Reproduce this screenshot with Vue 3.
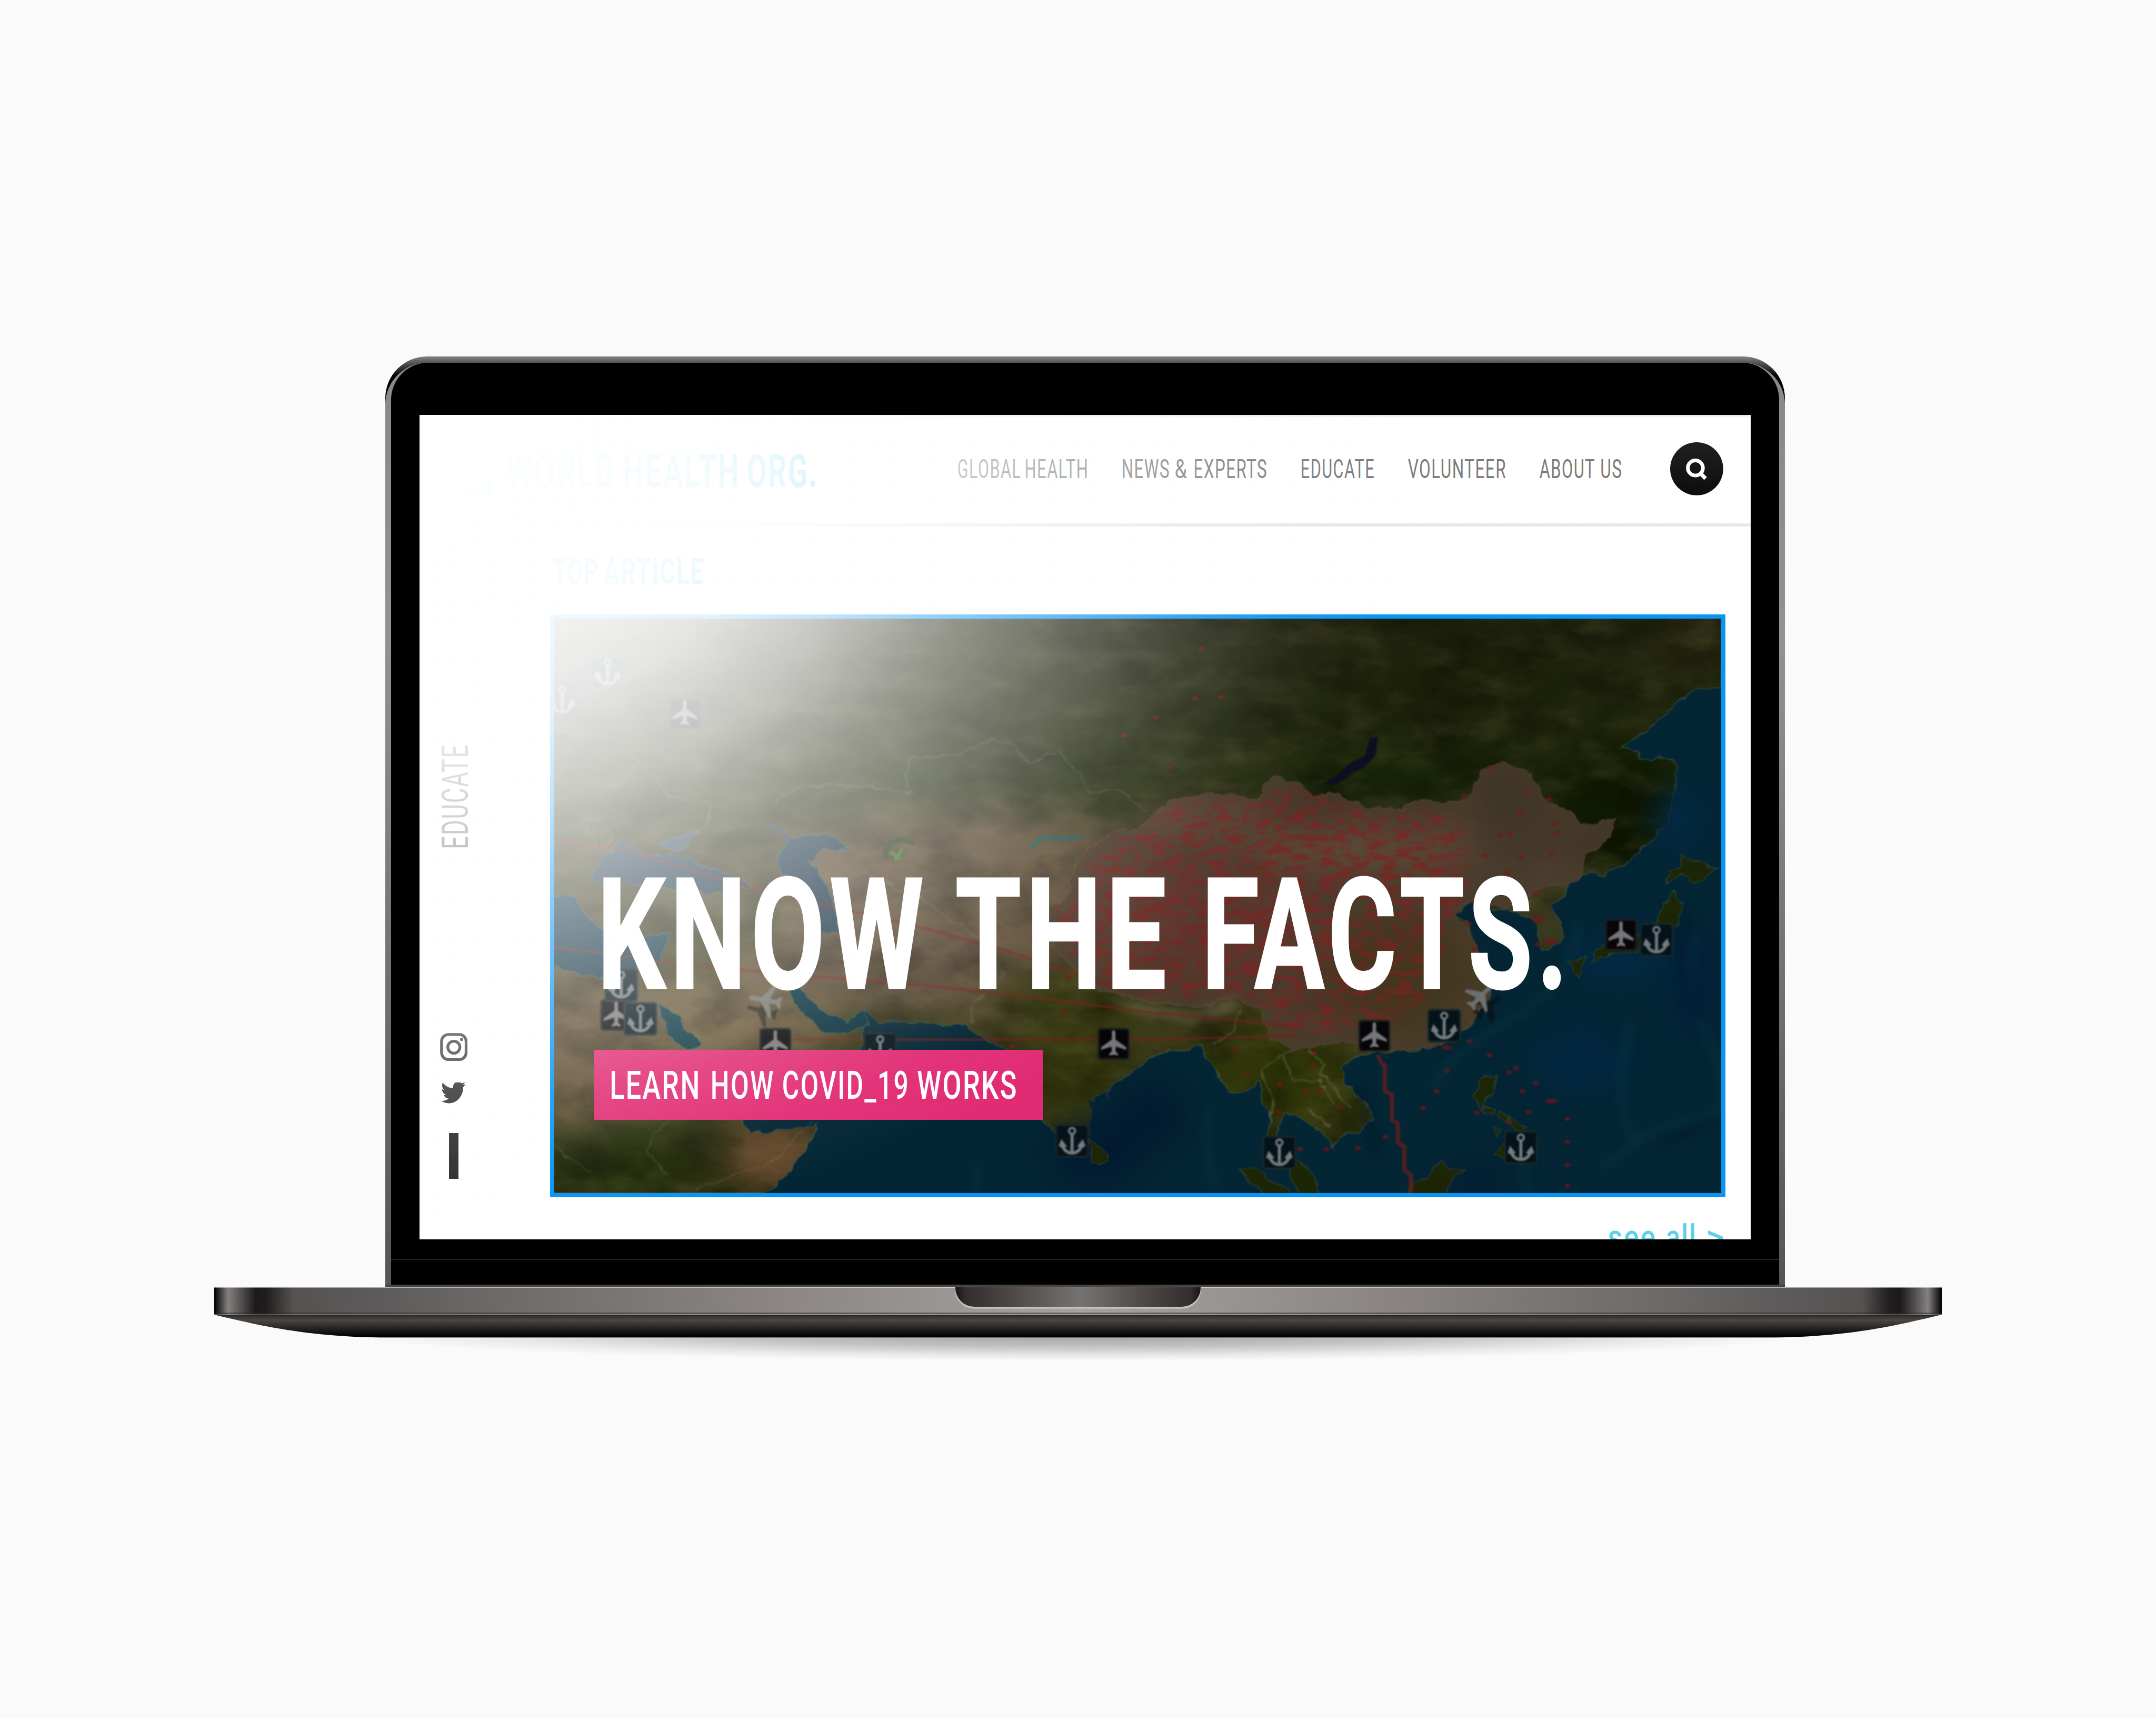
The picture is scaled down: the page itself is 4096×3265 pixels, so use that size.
<script setup>
import { h } from 'vue'

// One line of condensed capitals. Each word is fitted to its own width;
// `cap` is the cap height and sets the height of the box.
const FitText = (props) => {
  const size = props.size || props.cap / 0.711
  const pad = size * 0.025
  const last = props.words[props.words.length - 1]
  const w = last[1] + last[2]
  const up = props.vertical
  const texts = props.words.map(([t, x, len]) =>
    h('text', {
      x: x - pad,
      y: props.cap,
      textLength: len + pad * 3,
      lengthAdjust: 'spacingAndGlyphs',
      'font-size': size,
      'font-weight': props.weight || 400,
      fill: 'currentColor',
      stroke: 'currentColor',
      'stroke-width': props.bold || 0,
      'letter-spacing': size * 0.045,
      'font-family': 'Roboto, "Liberation Sans", sans-serif'
    }, t))
  return h('svg', {
    viewBox: up ? `0 0 ${props.cap} ${w}` : `0 0 ${w} ${props.cap}`,
    style: {
      width: (up ? props.cap : w) / 100 + 'rem',
      height: (up ? w : props.cap) / 100 + 'rem',
      overflow: 'visible',
      display: 'block',
      flex: 'none'
    }
  }, [h('g', { transform: up ? `translate(0 ${w}) rotate(-90)` : undefined }, texts)])
}
FitText.props = { words: Array, cap: Number, weight: Number, bold: Number, size: Number, vertical: Boolean }

const nav = [
  [['GLOBAL', 0, 144], ['HEALTH', 156, 144]],
  [['NEWS', 0, 108], ['&', 123, 26], ['EXPERTS', 167, 167]],
  [['EDUCATE', 0, 168]],
  [['VOLUNTEER', 0, 224]],
  [['ABOUT', 0, 125], ['US', 141, 47]]
]

const L = (x, y) => [1260 + x / 1.12, 1400 + y / 1.12]
const R = (x, y) => [2600 + x * 0.9247, 1400 + y / 1.12]
const anchors = [L(170, 178), L(52, 250), L(205, 990), L(255, 1078), L(877, 1157), L(1375, 1395),
  R(1343, 873), R(811, 1096), R(398, 1425), R(1003, 1412)]
const planes = [L(370, 285), L(192, 1068), L(605, 1143), L(1483, 1143), R(1254, 860), R(636, 1122)]
const cases = [[187, 246], [253, 243], [88, 296], [120, 427], [202, 118], [8, 342], [1075, 508], [925, 426],
  [860, 500], [872, 832], [888, 895], [875, 1136], [925, 1172], [818, 1153], [818, 1213], [973, 1217], [990, 1206],
  [1040, 1245], [1006, 1266], [792, 1266], [758, 1310], [893, 1322], [1023, 1320], [972, 1347], [1078, 1291],
  [1120, 1338], [1120, 1397], [1120, 1457], [1120, 1511], [595, 1413], [515, 1416], [450, 1416], [664, 1385],
  [547, 1307], [465, 1266], [498, 1266], [400, 1250], [397, 1320], [318, 1217], [482, 1200], [286, 1160],
  [484, 1166], [1045, 818], [1078, 878], [1045, 884], [1040, 752], [-140, 1060], [-130, 970], [-270, 1150],
  [950, 602], [975, 600], [1095, 595], [1088, 570], [1080, 648], [1005, 660], [970, 700], [1000, 545], [1020, 490], [912, 655]]
</script>

<template>
  <div class="stage">
    <div class="laptop">
      <div class="lid">
        <div class="bezel">
          <div class="screen">
            <header class="header">
              <svg class="logo" viewBox="0 0 100 100"><path d="M0 0h100L0 100z" opacity=".2" /><path d="M100 62v38H37z" /></svg>
              <FitText class="brand" :words="[['WORLD', 0, 244], ['HEALTH', 269, 264], ['ORG.', 557, 158]]" :cap="75" :weight="700" />
              <nav class="nav">
                <FitText v-for="(item, i) in nav" :key="i" :words="item" :cap="44" :weight="400" />
              </nav>
              <svg class="search" viewBox="0 0 123 123">
                <defs><linearGradient id="sg" x2="0" y2="1"><stop stop-color="#202020" /><stop offset="1" stop-color="#0d0d0d" /></linearGradient></defs>
                <circle cx="61.5" cy="61.5" r="61.5" fill="url(#sg)" />
                <circle cx="58.5" cy="59.5" r="17.5" fill="none" stroke="#fff" stroke-width="8.5" />
                <path d="M70 72l12 12" stroke="#fff" stroke-width="9" />
              </svg>
            </header>
            <div class="rule"></div>
            <div class="body">
              <aside class="side">
                <FitText class="section" vertical :words="[['EDUCATE', 0, 238]]" :cap="61" :weight="400" />
                <svg class="insta" viewBox="0 0 64 65" fill="none" stroke="#404040" stroke-width="6.5">
                  <rect x="3.5" y="3.5" width="57" height="58" rx="16" />
                  <circle cx="32" cy="33" r="14" />
                  <circle cx="50" cy="15" r="3.6" fill="#404040" stroke="none" />
                </svg>
                <svg class="bird" viewBox="0 3 24 19.5" preserveAspectRatio="none"><path d="M23.95 4.57a10 10 0 0 1-2.82.77 4.96 4.96 0 0 0 2.16-2.72c-.95.55-2 .95-3.13 1.18a4.92 4.92 0 0 0-8.38 4.48C7.69 8.09 4.07 6.13 1.64 3.16a4.82 4.82 0 0 0-.67 2.48c0 1.71.87 3.21 2.19 4.1a4.9 4.9 0 0 1-2.23-.62v.06a4.92 4.92 0 0 0 3.95 4.83 5 5 0 0 1-2.21.08 4.94 4.94 0 0 0 4.6 3.42A9.87 9.87 0 0 1 0 19.54a13.99 13.99 0 0 0 7.55 2.21c9.05 0 14-7.5 14-13.98 0-.21 0-.42-.02-.63a9.94 9.94 0 0 0 2.46-2.55z" /></svg>
                <div class="bar"></div>
              </aside>
              <main class="main">
                <FitText class="kicker" :words="[['TOP', 0, 103], ['ARTICLE', 119, 228]]" :cap="59" :weight="700" />
                <section class="hero">
                  <svg class="map" viewBox="1288 1435 2703 1331" preserveAspectRatio="none">
                    <defs>
                      <linearGradient id="land" x2="0" y2="1">
                        <stop stop-color="#1d210d" /><stop offset=".3" stop-color="#262e10" />
                        <stop offset=".42" stop-color="#3a3920" /><stop offset=".75" stop-color="#3c3a1a" /><stop offset="1" stop-color="#232a08" />
                      </linearGradient>
                      <filter id="b40" x="-50%" y="-50%" width="200%" height="200%" color-interpolation-filters="sRGB"><feGaussianBlur stdDeviation="42" /></filter>
                      <filter id="b12" x="-50%" y="-50%" width="200%" height="200%" color-interpolation-filters="sRGB"><feGaussianBlur stdDeviation="13" /></filter>
                      <filter id="soft" color-interpolation-filters="sRGB"><feGaussianBlur stdDeviation="1.8" /></filter>
                      <filter id="grain" x="0" y="0" width="100%" height="100%" color-interpolation-filters="sRGB">
                        <feTurbulence type="fractalNoise" baseFrequency=".007 .011" numOctaves="6" seed="8" />
                        <feColorMatrix values="0 0 0 0 .03  0 0 0 0 .04  0 0 0 0 0  2.6 0 0 0 -1.05" />
                      </filter>
                      <filter id="glow" x="0" y="0" width="100%" height="100%" color-interpolation-filters="sRGB">
                        <feTurbulence type="fractalNoise" baseFrequency=".009 .018" numOctaves="5" seed="21" />
                        <feColorMatrix values="0 0 0 0 .62  0 0 0 0 .54  0 0 0 0 .36  0 2.2 0 0 -1" />
                      </filter>
                      <filter id="rough" x="-5%" y="-5%" width="110%" height="110%" color-interpolation-filters="sRGB">
                        <feTurbulence type="fractalNoise" baseFrequency=".03" numOctaves="3" seed="3" />
                        <feDisplacementMap in="SourceGraphic" scale="22" xChannelSelector="R" yChannelSelector="G" />
                        <feGaussianBlur stdDeviation="1.4" />
                      </filter>
                      <filter id="redspots" x="0" y="0" width="100%" height="100%" color-interpolation-filters="sRGB">
                        <feTurbulence type="fractalNoise" baseFrequency=".026 .06" numOctaves="3" seed="12" />
                        <feColorMatrix values="0 0 0 0 .5  0 0 0 0 .13  0 0 0 0 .13  4 0 0 0 -1.7" result="n" />
                        <feGaussianBlur in="SourceGraphic" stdDeviation="9" result="s" />
                        <feComposite in="n" in2="s" operator="in" />
                        <feGaussianBlur stdDeviation="1.6" />
                      </filter>
                      <g id="anchor">
                        <rect x="-37" y="-37" width="74" height="74" rx="6" fill="#04131a" stroke="#1a2a2c" stroke-width="4" />
                        <g stroke="#777b7d" fill="none" stroke-width="7">
                          <circle cy="-23" r="7" stroke-width="5" /><path d="M0-15V28" /><path d="M-23 10Q-16 28 0 28T23 10" />
                        </g>
                        <path d="M-31 12L-25-4L-12 12L-20 18ZM31 12L25-4L12 12L20 18Z" fill="#777b7d" />
                      </g>
                      <path id="jet" d="M-4-29Q0-34 4-29V-10L29 8V14L5 6L4 17L10 23V27L0 25L-10 27V23L-4 17L-5 6L-29 14V8L-4-10Z" />
                      <g id="plane">
                        <rect x="-35" y="-35" width="70" height="70" rx="6" fill="#060608" stroke="#1d2022" stroke-width="4" />
                        <use href="#jet" fill="#77777a" />
                      </g>
                    </defs>

                    <rect x="1288" y="1435" width="2703" height="1331" fill="url(#land)" />
                    <g filter="url(#b40)">
                      <ellipse cx="2250" cy="2080" rx="480" ry="200" fill="#5b4b34" />
                      <ellipse cx="2100" cy="2230" rx="380" ry="100" fill="#5c4a36" />
                      <ellipse cx="1700" cy="2090" rx="200" ry="60" fill="#4e4a2c" />
                      <ellipse cx="1650" cy="2370" rx="280" ry="110" fill="#6a5839" />
                      <ellipse cx="1350" cy="2450" rx="130" ry="180" fill="#604e33" />
                      <ellipse cx="1420" cy="2690" rx="180" ry="80" fill="#202c06" />
                      <ellipse cx="1800" cy="2680" rx="120" ry="90" fill="#65482d" />
                      <ellipse cx="2540" cy="2300" rx="240" ry="55" fill="#35390d" />
                      <ellipse cx="2500" cy="2480" rx="130" ry="110" fill="#33360e" />
                      <ellipse cx="2950" cy="2500" rx="220" ry="120" fill="#2f3508" />
                      <ellipse cx="3760" cy="1880" rx="170" ry="170" fill="#101a02" />
                      <ellipse cx="3300" cy="1800" rx="300" ry="60" fill="#142006" />
                      <ellipse cx="3930" cy="1500" rx="100" ry="40" fill="#2d2813" />
                      <ellipse cx="3400" cy="1600" rx="300" ry="70" fill="#1b2009" />
                    </g>
                    <rect x="1288" y="1435" width="2703" height="1331" filter="url(#grain)" opacity=".38" />
                    <rect x="1288" y="1435" width="2703" height="1331" filter="url(#glow)" opacity=".16" />

                    <g filter="url(#rough)" stroke="#4d7060" stroke-opacity=".45" stroke-width="3">
                      <g transform="translate(1260 1400) scale(.8929)">
                        <path fill="#042534" d="M840 1060L870 1085L1100 1095L1130 1120L1180 1145L1220 1165L1300 1340L1330 1370L1370 1425L1420 1385L1430 1340L1435 1280L1480 1260L1580 1195V1560H550L640 1470L700 1400L712 1350L600 1370L540 1370L515 1345L620 1300L820 1180L835 1100Z" />
                        <path fill="#07303c" d="M640 1005L670 1000L720 1050L790 1085L835 1060L850 1095L770 1115L730 1110L700 1080L660 1050Z" />
                        <path fill="#0b3640" d="M298 1035L350 1070L410 1150L380 1160L330 1120Z" />
                        <path fill="#1b3445" d="M605 655L640 610L700 600L750 600L795 640L740 640L690 665L735 720L760 800L770 850L710 850L700 760L630 700Z" />
                        <path fill="#1e3547" d="M130 715L150 660L210 615L260 650L310 655L350 650L420 685L500 710L545 735L450 750L350 745L250 730Z" />
                        <path fill="#2b4050" d="M305 625L340 605L410 590L380 630L340 642Z" />
                        <path fill="#123344" d="M20 760L80 755L100 800L150 840L200 870L330 855L310 930L240 935L230 975L140 970L20 945Z" />
                        <path fill="none" stroke="#25384a" stroke-width="7" d="M550 550L640 612" stroke-opacity="1" />
                      </g>
                      <g transform="translate(2600 1400) scale(.9247 .8929)">
                        <path fill="#042534" d="M1540 220L1440 222L1400 250L1330 320L1255 372L1290 380L1300 400L1330 410L1350 392L1390 415L1392 460L1375 560L1330 610L1260 680L1210 705L1165 700L1120 730L1115 755L1075 780L1110 830L1105 880L1060 900L1045 860L1050 840L1000 800L960 800L880 770L835 805L870 830L880 870L905 930L930 1000L900 1060L860 1110L800 1145L720 1160L640 1165L590 1175L550 1205L570 1250L610 1290L630 1340L610 1365L570 1375L530 1410L520 1385L470 1350L440 1325L410 1325L390 1385L374 1380L380 1340L355 1290L350 1240L310 1270L270 1270L230 1200L200 1150L100 1165L60 1190L-30 1262V1560H1540Z" />
                        <rect x="-75" y="1290" width="70" height="260" fill="#042534" stroke="none" />
                      </g>
                    </g>
                    <g transform="translate(2600 1400) scale(.9247 .8929)" filter="url(#b40)">
                      <ellipse cx="-60" cy="1430" rx="110" ry="80" fill="#021a30" /><ellipse cx="70" cy="1330" rx="90" ry="80" fill="#021a30" />
                      <ellipse cx="1250" cy="920" rx="120" ry="60" fill="#032a45" /><ellipse cx="1400" cy="560" rx="60" ry="80" fill="#022943" />
                      <ellipse cx="1150" cy="1190" rx="130" ry="90" fill="#032741" /><ellipse cx="1430" cy="980" rx="50" ry="140" fill="#02203c" />
                      <ellipse cx="900" cy="1500" rx="70" ry="40" fill="#021c33" />
                    </g>
                    <g transform="translate(2600 1400) scale(.9247 .8929)" filter="url(#b12)" fill="none" stroke="#0b4450" stroke-opacity=".38" stroke-width="14">
                      <path d="M1440 860Q1400 1000 1460 1100T1500 1320L1330 1370L1200 1470" /><path d="M1280 1080Q1230 1300 1290 1400" />
                      <path d="M1150 820Q1130 1000 980 1080T780 1260" /><path d="M230 1290Q200 1400 240 1520" /><path d="M1010 1450L1020 1540M-360 1450V1530" />
                      <path stroke="#011026" stroke-opacity=".6" d="M1420 800Q1390 960 1450 1080M1350 1400L1490 1340M600 1250L640 1440" />
                    </g>
                    <g filter="url(#rough)" stroke="#4d7060" stroke-opacity=".4" stroke-width="2.5" fill="#1d2507">
                      <path d="M2532 2641L2573 2681L2555 2704L2532 2695Z" />
                      <g transform="translate(2600 1400) scale(.9247 .8929)">
                        <path d="M295 1468L340 1472L400 1505L440 1545H370Z" /><path d="M415 1440L460 1455L488 1490L505 1545H455L425 1490Z" />
                        <path d="M700 1550L770 1480L800 1450L820 1465L862 1470L830 1500L805 1550Z" />
                        <path d="M905 1230L940 1225L940 1260L912 1300L905 1315L885 1280Z" />
                        <path d="M912 1308L940 1318L935 1330L912 1322ZM950 1318L980 1335L970 1345L948 1330ZM935 1355L955 1360L945 1385ZM980 1335L1015 1362L1005 1372L975 1350Z" />
                        <path d="M940 1430L975 1395L1000 1370L1025 1390L1040 1430L990 1450Z" />
                        <path d="M1405 645L1440 670L1495 685L1440 725L1400 700L1370 725L1375 690L1405 685Z" />
                        <path d="M1385 740L1410 780L1395 830L1350 850L1290 910L1230 905L1180 935L1190 900L1240 875L1300 860L1345 825L1365 780Z" />
                        <path d="M1120 925L1165 920L1150 970L1130 955Z" />
                      </g>
                    </g>
                    <g fill="none" filter="url(#soft)">
                      <path transform="translate(2600 1400) scale(.9247 .8929)" d="M645 345L638 395L610 425L580 440L545 468L500 472L540 448L575 415L612 395L625 350Z" fill="#0c0f22" />
                      <path transform="translate(1260 1400) scale(.8929)" stroke="#1e5a56" stroke-width="9" d="M1270 635Q1285 605 1320 608T1400 606" />
                      <path transform="translate(1260 1400) scale(.8929)" stroke="#27421c" stroke-width="10" d="M892 660Q885 625 930 612L965 622" />
                      <path transform="translate(1260 1400) scale(.8929)" stroke="#3f7a26" stroke-width="8" d="M905 645L930 665M935 635L915 668" />
                      <g transform="translate(1260 1400) scale(.8929)" stroke="#a9ad8c" stroke-opacity=".25" stroke-width="3" filter="url(#rough)">
                        <path d="M605 520Q640 470 740 470T960 490Q930 460 955 400L1060 395L1170 355L1215 360L1260 415L1340 380L1430 490L1500 480L1568 540" />
                        <path d="M30 460L90 465L200 470L220 450L290 450L330 500L440 520L430 570L395 600" />
                        <path d="M30 320L100 350L60 390M140 330L200 360L250 410L220 450M105 560L150 640L185 610L150 565Z" />
                        <path d="M330 1340L290 1380L270 1420L340 1500M30 1410L130 1480M700 1340L600 1450L400 1520" />
                        <path d="M1110 1090L1120 1040L1200 960L1150 880L1000 780L820 690" />
                      </g>
                      <g transform="translate(2600 1400) scale(.9247 .8929)" stroke="#a9ad8c" stroke-opacity=".38" stroke-width="3" filter="url(#rough)">
                        <path d="M430 1160L350 1210L380 1280L375 1340M410 1180L435 1245L500 1235L535 1300M470 1160L515 1200L500 1220L580 1310M470 1310L530 1360" />
                        <path d="M300 1050L280 1110L230 1150" />
                      </g>
                    </g>

                    <g transform="translate(2600 1400) scale(.9247 .8929)">
                      <g filter="url(#rough)">
                        <path fill="#4c3d2f" fill-opacity=".85" stroke="#7a5a50" stroke-opacity=".35" stroke-width="3" d="M-80 640L-20 590L50 580L90 540L130 510L230 490L350 510L355 470L390 450L440 465L480 500L540 495L620 530L700 535L760 510L860 520L890 470L905 430L960 412L1030 440L1060 510L1130 540L1150 575L1240 560L1220 620L1160 660L1150 720L1050 740L960 790L880 770L835 805L870 830L880 870L905 930L930 1000L900 1060L860 1110L800 1145L720 1160L640 1165L560 1140L430 1160L380 1130L350 1050L280 1020L200 1050L60 1035L-60 1000L-160 900L-190 800L-130 760L-120 690Z" />
                      </g>
                      <g filter="url(#b40)" opacity=".6">
                        <ellipse cx="600" cy="640" rx="300" ry="60" fill="#6b5140" /><ellipse cx="200" cy="560" rx="170" ry="40" fill="#6a5040" />
                        <ellipse cx="200" cy="830" rx="320" ry="150" fill="#5f3a31" /><ellipse cx="700" cy="960" rx="180" ry="150" fill="#3f3518" />
                        <ellipse cx="970" cy="520" rx="70" ry="80" fill="#3a3322" />
                      </g>
                      <path filter="url(#redspots)" opacity=".68" d="M-60 650L0 600L60 590L100 550L140 520L230 505L350 520L390 470L540 510L620 545L700 550L760 530L850 560L880 700L820 880L780 1000L700 1090L560 1110L430 1120L390 1110L350 1040L280 1010L200 1030L60 1015L-50 980L-140 890L-170 800L-110 760L-100 690Z" />
                      <path fill="#b9b3aa" opacity=".28" filter="url(#b12)" d="M-60 1015L60 1040L190 1062L290 1025L300 1045L180 1085L40 1065Z" />
                    </g>

                    <g fill="none" stroke="#7c1d18" stroke-opacity=".62" stroke-width="6" filter="url(#soft)">
                      <g transform="translate(1260 1400) scale(.8929)">
                        <path d="M30 615L200 635L530 735L1000 845L1200 900L1500 1000" /><path d="M30 892L330 930L560 955L1000 992L1300 1025L1568 1060L1950 1097" />
                        <path d="M650 1132H1568L1950 1122" />
                      </g>
                      <path transform="translate(2600 1400) scale(.9247 .8929)" stroke-width="11" d="M645 1172L652 1190L662 1200V1265L680 1275V1340L695 1350V1400L711 1410V1470L728 1485V1535" />
                    </g>
                    <g transform="translate(2600 1400) scale(.9247 .8929)" fill="#7c151b" opacity=".6" filter="url(#soft)">
                      <ellipse v-for="(c, i) in cases" :key="i" :cx="c[0]" :cy="c[1]" rx="8" ry="6" />
                      <ellipse cx="1045" cy="818" rx="18" ry="7" /><ellipse cx="1078" cy="878" rx="16" ry="8" /><ellipse cx="1080" cy="1291" rx="16" ry="7" />
                      <ellipse cx="818" cy="1153" rx="15" ry="6" />
                    </g>

                    <g filter="url(#soft)">
                      <use v-for="(p, i) in planes" :key="'p' + i" href="#plane" :x="p[0]" :y="p[1]" />
                      <use v-for="(p, i) in anchors" :key="'a' + i" href="#anchor" :x="p[0]" :y="p[1]" />
                      <use href="#jet" fill="#111" opacity=".6" transform="translate(1772 2345) rotate(-75) scale(1.2)" />
                      <use href="#jet" fill="#77766f" transform="translate(1780 2320) rotate(-80) scale(1.3)" />
                      <use href="#jet" fill="#0a0f10" opacity=".7" transform="translate(3450 2335) rotate(50) scale(1.2)" />
                      <use href="#jet" fill="#6d7072" transform="translate(3433 2312) rotate(45) scale(1.2)" />
                    </g>
                  </svg>
                  <h1 class="headline">
                    <FitText :words="[['KNOW', 0, 741], ['THE', 830, 474], ['FACTS.', 1402, 832]]" :cap="255" :weight="700" :bold="4" />
                  </h1>
                  <div class="cta">
                    <FitText :words="[['LEARN', 0, 205], ['HOW', 234, 142], ['COVID_19', 400, 289], ['WORKS', 713, 227]]" :cap="65" :weight="500" />
                  </div>
                </section>
                <FitText class="more" :words="[['see', 0, 108], ['all', 135, 67], ['>', 228, 40]]" :cap="59" :size="80" :weight="500" />
              </main>
            </div>
            <div class="glare"></div>
          </div>
          <div class="hinge"></div>
        </div>
      </div>
      <div class="deck">
        <div class="notch"></div>
      </div>
      <svg class="under" viewBox="0 0 4006 110">
        <defs>
          <linearGradient id="belly" gradientUnits="userSpaceOnUse" x1="0" y1="0" x2="0" y2="53">
            <stop stop-color="#1c1a1a" /><stop offset=".08" stop-color="#383433" /><stop offset=".25" stop-color="#4c4745" />
            <stop offset=".5" stop-color="#302d2b" /><stop offset=".75" stop-color="#161513" /><stop offset=".96" stop-color="#000" /><stop offset="1" stop-color="#444" />
          </linearGradient>
          <radialGradient id="shade"><stop stop-color="#000" stop-opacity=".38" /><stop offset=".5" stop-color="#000" stop-opacity=".22" /><stop offset=".8" stop-color="#000" stop-opacity=".07" /><stop offset="1" stop-color="#000" stop-opacity="0" /></radialGradient>
        </defs>
        <ellipse cx="2003" cy="42" rx="1720" ry="66" fill="url(#shade)" />
        <path fill="url(#belly)" d="M0 0H4006C3900 26 3780 53 3600 53H406C226 53 106 26 0 0Z" />
      </svg>
    </div>
  </div>
</template>

<style>
html { font-size: 81.92px; }
body { margin: 0; background: #fafafa; overflow: hidden; }
</style>

<style scoped>
.stage {
  height: 100vh;
  box-sizing: border-box;
  padding-top: 8.27rem;
  display: flex;
  justify-content: center;
  align-items: flex-start;
  background: #fafafa;
}
.laptop { width: 40.06rem; display: flex; flex-direction: column; }
.lid {
  position: relative;
  width: 32.47rem;
  height: 21.57rem;
  margin-left: 3.96rem;
  box-sizing: border-box;
  padding: .14rem .145rem .06rem .14rem;
  border-radius: .97rem .97rem 0 0;
  background: linear-gradient(#848484 0, #575757 .14rem, #000 .45rem, #000 1.2rem, #444 2rem);
}
.lid::before {
  content: "";
  position: absolute;
  inset: .14rem 0 .06rem;
  border-radius: .97rem .97rem 0 0;
  background: linear-gradient(#888, #929292 30%, #777 60%, #565455);
}
.bezel {
  position: relative;
  height: 100%;
  box-sizing: border-box;
  padding: 1.21rem .66rem 0;
  border-radius: .86rem .86rem 0 0;
  background: #000;
}
.screen {
  position: relative;
  height: 19.11rem;
  overflow: hidden;
  background: #fff;
}
.hinge { margin: .47rem -.66rem 0; height: .012rem; background: #333; }

.header {
  height: 2.5rem;
  box-sizing: border-box;
  padding: 0 .63rem 0 .67rem;
  display: flex;
  align-items: center;
  background: linear-gradient(#e4e4e4, #fff .07rem);
}
.logo { width: 1rem; height: 1rem; margin-top: .16rem; flex: none; fill: #3fc3e6; }
.brand { margin: .1rem 0 0 .38rem; color: #3fc3e6; }
.nav { margin-left: auto; display: flex; gap: .81rem; color: #7c7c7c; }
.search { width: 1.23rem; height: 1.23rem; margin-left: 1.14rem; flex: none; }
.rule { height: .1rem; background: linear-gradient(#f6f6f6, #e2e2e2 50%, #f8f8f8); }

.body { display: flex; }
.side { width: 3.03rem; flex: none; }
.side > * { display: block; }
.section { margin: 5.06rem 0 0 .51rem; color: #505050; }
.insta { width: .64rem; height: .65rem; margin: 4.29rem 0 0 .47rem; }
.bird { width: .57rem; height: .5rem; margin: .5rem 0 0 .5rem; fill: #303030; }
.bar { width: .22rem; height: 1.06rem; margin: .67rem 0 0 .68rem; background: #2b2b2b; }

.main { width: 27.25rem; flex: none; padding-top: .73rem; }
.kicker { color: #3fc3e6; margin-left: .07rem; }
.hero {
  position: relative;
  width: 27.25rem;
  height: 13.51rem;
  box-sizing: border-box;
  margin-top: .71rem;
  border: .1rem solid #0795f5;
  overflow: hidden;
}
.map { position: absolute; inset: 0; width: 100%; height: 100%; }
.headline { position: relative; margin: 6.01rem 0 0 1.08rem; color: #fff; }
.cta {
  position: relative;
  width: 10.39rem;
  height: 1.63rem;
  box-sizing: border-box;
  margin: 1.43rem 0 0 .93rem;
  padding-left: .37rem;
  display: flex;
  align-items: center;
  background: #e12c73;
  color: #fff;
}
.more { margin: .61rem 0 0 24.54rem; color: #5fd0ea; }
.glare {
  position: absolute;
  inset: 0;
  pointer-events: none;
  background: radial-gradient(23rem 19rem at 0 .4rem, rgba(255,255,255,.98) 12%, rgba(255,255,255,.95) 26%, rgba(255,255,255,.89) 36%, rgba(255,255,255,.75) 47%, rgba(255,255,255,.54) 58%, rgba(255,255,255,.34) 70%, rgba(255,255,255,.15) 82%, rgba(255,255,255,.04) 92%, transparent);
}

.deck {
  position: relative;
  height: .64rem;
  display: flex;
  justify-content: center;
  background:
    linear-gradient(rgba(255,255,255,.5) 0, rgba(255,255,255,.5) .03rem, transparent .03rem, transparent .6rem, rgba(40,45,35,.5) .6rem, rgba(40,45,35,.5) .63rem, rgba(255,255,255,.3) .63rem),
    linear-gradient(90deg, #000 0, #858180 .8%, #1b1919 2.4%, #1f1d1d 3%, #575252 4.6%, #5a5858 8%, #6c6967 16%, #8a8583 32%, #a5a29f 50%, #8a8583 68%, #6c6967 84%, #5a5858 92%, #575252 95.4%, #1f1d1d 97%, #1b1919 97.6%, #858180 99.2%, #000 100%);
}
.notch {
  width: 5.7rem;
  height: .46rem;
  border-radius: 0 0 .44rem .44rem;
  background: linear-gradient(90deg, #161414, #332e2d 4%, #4c4745 22%, #757371 51%, #4c4745 78%, #332e2d 96%, #161414);
  box-shadow: 0 .035rem 0 .012rem #c3c0be;
  clip-path: inset(0 -.1rem -.1rem);
}
.under { display: block; width: 40.06rem; height: 1.1rem; }
</style>
